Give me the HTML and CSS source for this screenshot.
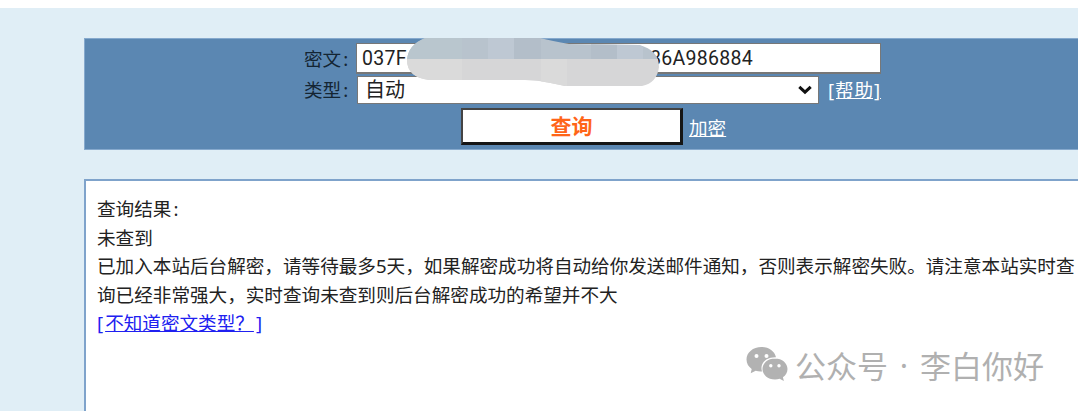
FILE: index.html
```html
<!DOCTYPE html>
<html lang="zh-CN">
<head>
<meta charset="utf-8">
<title>密文查询</title>
<link rel="stylesheet" href="styles.css">
</head>
<body>
<main class="page">
  <form class="search">
    <div class="row">
      <label class="label">密文<span class="colon">:</span></label>
      <div class="input"><span class="start">037F</span><span class="end">86A986884</span>
        <svg class="mosaic" width="254" height="50" viewBox="0 0 254 50">
          <defs><clipPath id="blob"><path d="M18 0H133Q145 3 162 6L232 7Q252 12 252 29Q250 45 235 48H158Q145 45 132 43L118 42H22Q0 39 0 22Q1 7 18 0Z"/></clipPath></defs>
          <g clip-path="url(#blob)">
            <path fill="#b8c3cd" d="M0 0h254v21H0z"/><path fill="#d6d6d7" d="M0 21h254v29H0z"/>
            <path fill="#b9c6ce" d="M0 0h55v21H0z"/><path fill="#bec8d3" d="M81 0h26v21H81zM210 0h26v21h-26z"/><path fill="#b3bec9" d="M107 0h27v21h-27zM184 0h26v21h-26z"/>
            <path fill="#dadada" d="M0 21h55v29H0zM134 21h26v29h-26z"/>
          </g>
        </svg>
      </div>
    </div>
    <div class="row">
      <label class="label">类型<span class="colon">:</span></label>
      <div class="select"><span>自动</span><svg class="arrow" width="14" height="10" viewBox="0 0 14 10"><path d="M1.300 1.800 7 7.200l5.700-5.400" fill="none" stroke="#111" stroke-width="3"/></svg></div>
      <a class="help" href="#">[帮助]</a>
    </div>
    <div class="actions"><button class="query" type="button">查询</button><a class="encrypt" href="#">加密</a></div>
  </form>
  <section class="result">
    <p>查询结果<span class="colon">:</span></p>
    <p class="status">未查到</p>
    <p class="line">已加入本站后台解密，请等待最多5天，如果解密成功将自动给你发送邮件通知，否则表示解密失败。请注意本站实时查</p>
    <p class="line">询已经非常强大，实时查询未查到则后台解密成功的希望并不大</p>
    <p class="type"><a href="#"><span class="bracket">[</span>不知道密文类型？<span class="bracket close">]</span></a></p>
    <div class="watermark">
      <svg width="42" height="36" viewBox="0 0 42 36">
        <path fill="#b2b2b2" d="M15.500 1C7 1 .5 6.500.5 13.500c0 4 2 7.200 5.200 9.500l-1 4.300 5-2.500c2 .6 4 .9 6.300.7-2.500-8 4-14.500 14-14.200C28.500 5 23 1 15.500 1z"/>
        <path fill="#b2b2b2" d="M29 12.500c-7.200 0-12.500 4.700-12.500 10.500S21.800 33.500 29 33.500c1.700 0 3.200-.2 4.600-.7l4.300 2.200-1-3.700c2.800-2 4.600-4.900 4.600-8.300 0-5.800-5.300-10.500-12.500-10.500z"/>
        <g fill="#fff"><circle cx="10.500" cy="10" r="2"/><circle cx="20.500" cy="10" r="2"/><circle cx="24.800" cy="19.800" r="1.700"/><circle cx="33" cy="19.800" r="1.700"/></g>
      </svg>
      <span class="account">公众号</span><span class="dot">·</span><span class="name">李白你好</span>
    </div>
  </section>
</main>
</body>
</html>
```
FILE: styles.css
```css
* { box-sizing: border-box; }
body { margin: 0; background: #fff; color: #222; font: 18.6px/28.6px "Noto Sans", "Noto Sans CJK SC", sans-serif; }
p { margin: 0; height: 28.6px; white-space: nowrap; }
.page { width: 1078px; height: 403px; margin-top: 8px; padding: 30px 0 0 84px; background: #e0eef6; overflow: hidden; }
.search { height: 112px; padding-top: 4px; background: #5b87b2; border: 1px solid #86a9cd; border-width: 1px 0 1px 1px; }
.row { display: flex; align-items: center; height: 31px; padding-left: 219px; }
.label { width: 52px; padding-top: 1px; color: #142533; }
.colon { margin-left: 2px; }
.input { position: relative; display: flex; justify-content: space-between; align-items: center; width: 525px; height: 31px; padding: 0 127px 0 5px; background: #fff; border: 1px solid #777; border-bottom-width: 2px; font: 19.500px/28px Roboto, sans-serif; letter-spacing: .3px; }
.input span { padding-top: 2px; }
.mosaic { position: absolute; left: 50px; top: -6px; z-index: 1; }
.select { display: flex; align-items: center; justify-content: space-between; width: 462px; height: 28px; margin-left: 1px; padding: 2px 6px 0 7px; background: #fff; border: 1px solid #777; font-size: 20px; }
.arrow { margin-bottom: 2px; }
.help { margin-left: 9px; padding-top: 1px; color: #fff; letter-spacing: .9px; }
.actions { display: flex; align-items: center; padding: 0 0 0 376px; height: 43px; }
.query { width: 222px; height: 37px; padding: 2px 0 0; border: 3px solid #151515; border-top: 2px solid #444; border-left: 2px solid #444; background: #fff; color: #ff6518; font: bold 21px/28px "Liberation Sans", "Noto Sans CJK SC", sans-serif; }
.encrypt { margin-left: 6px; padding-top: 3px; color: #fff; }
.result { height: 240px; margin-top: 29px; padding: 14px 0 0 11px; background: #fff; border: 2px solid #7fa3cb; border-width: 2px 0 0 2px; }
.status { line-height: 27px; }
.type a { color: #2020f0; }
.bracket { letter-spacing: 2px; }
.close { margin-left: 2px; letter-spacing: 0; }
.watermark { display: flex; align-items: center; margin: 7px 0 0 649px; height: 40px; color: #b0b0b0; font: 31px/40px "Noto Sans CJK SC", sans-serif; white-space: nowrap; }
.account { margin-left: 7px; }
.dot { width: 32px; text-align: center; font-family: "Noto Sans", sans-serif; }
.watermark svg { margin-bottom: 1px; }
```
